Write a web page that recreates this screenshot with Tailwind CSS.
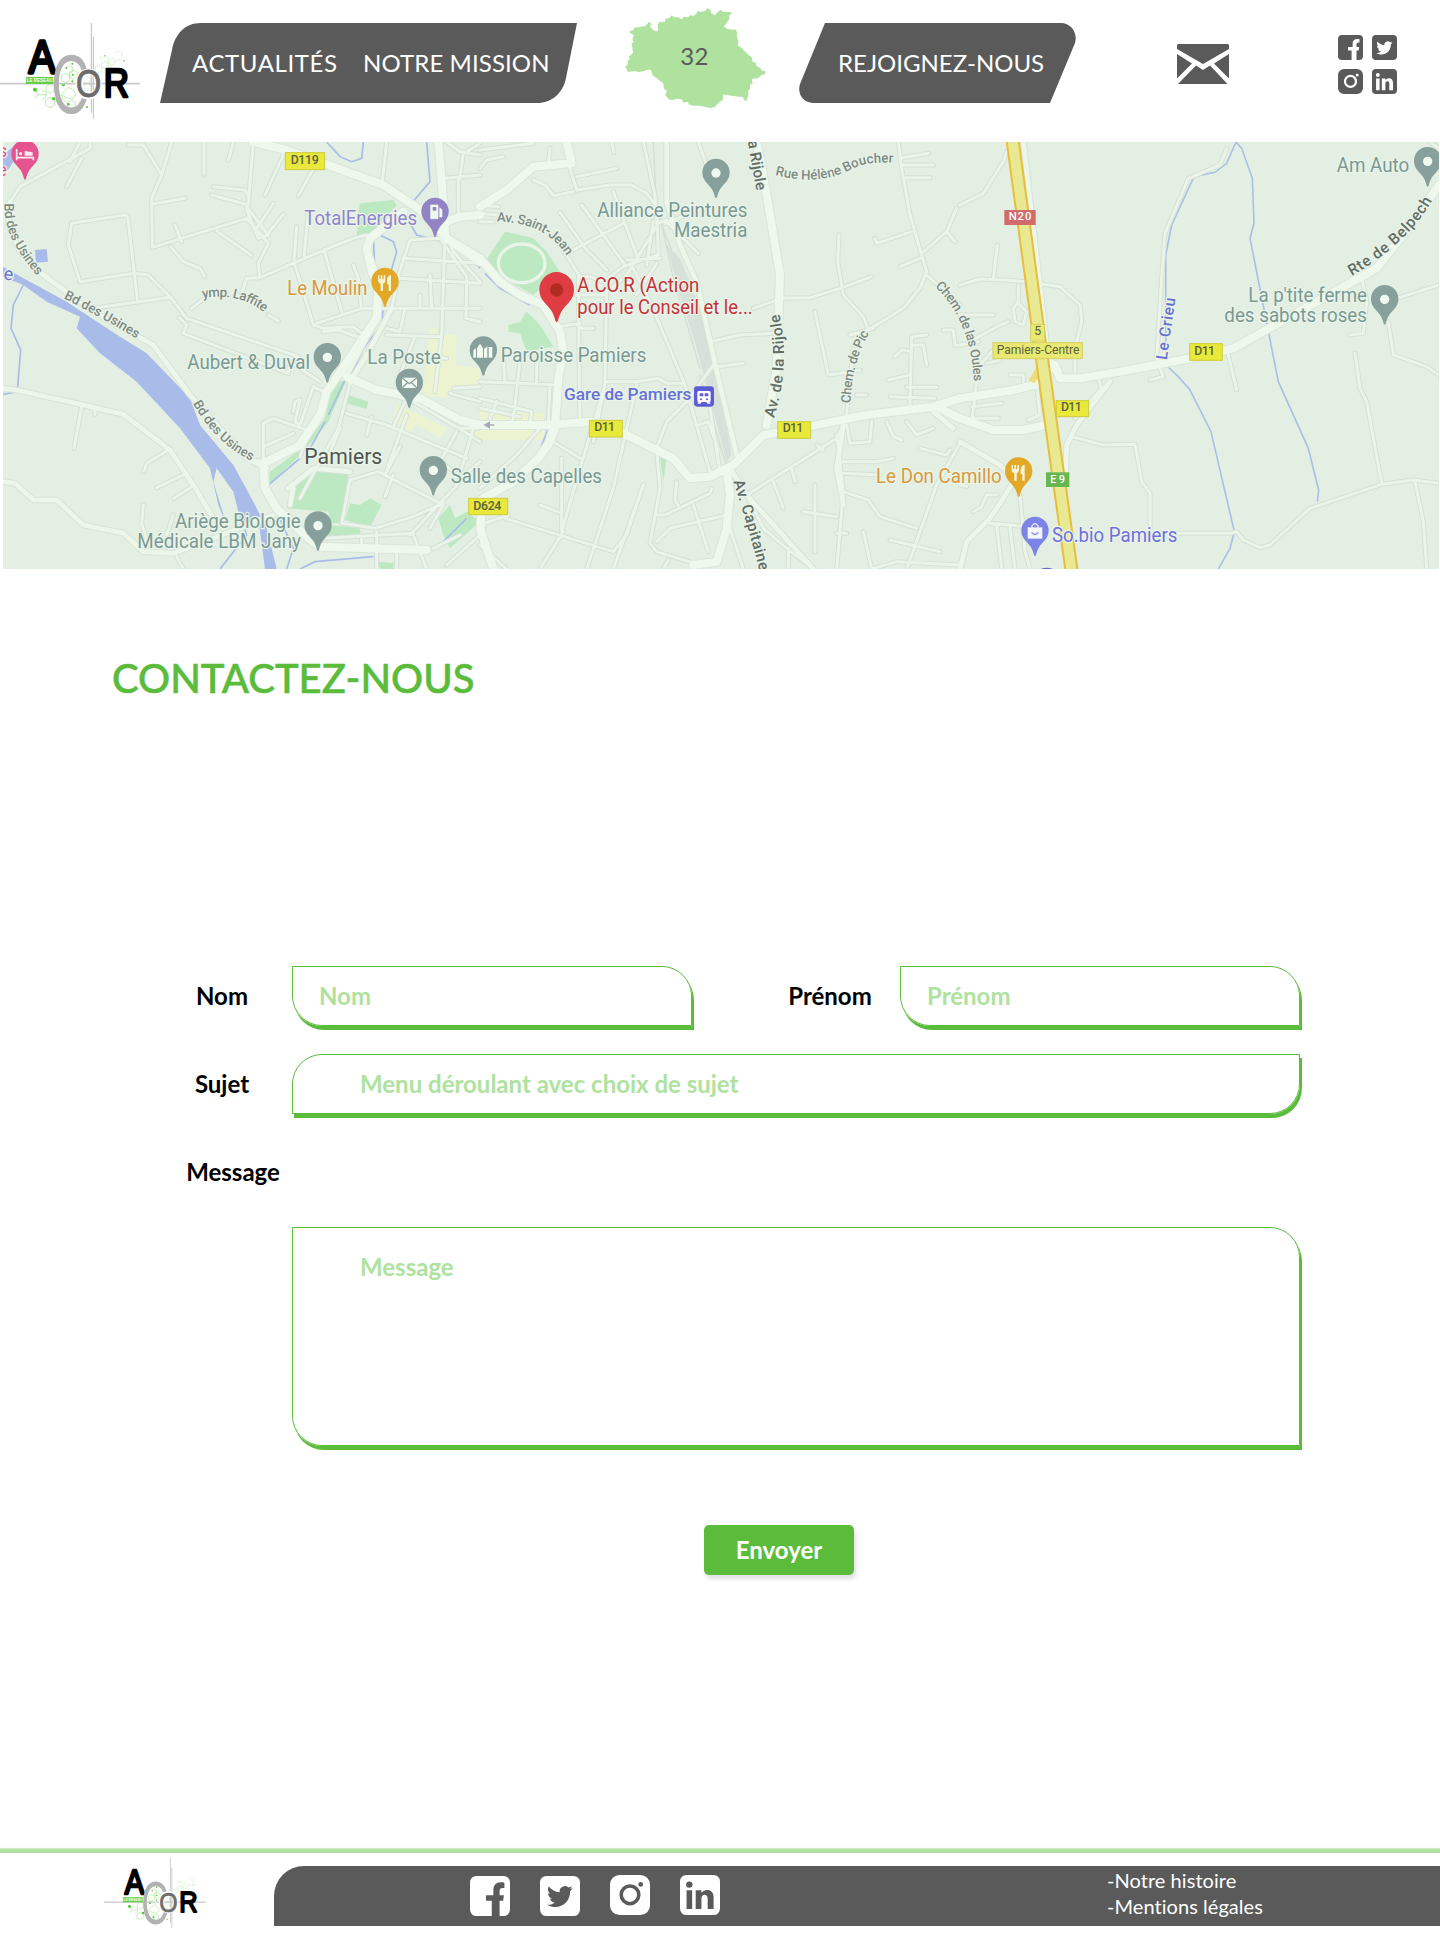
<!DOCTYPE html>
<html lang="fr">
<head>
<meta charset="utf-8">
<title>ACOR - Contactez-nous</title>
<script src="https://cdn.jsdelivr.net/npm/@tailwindcss/browser@4"></script>
</head>
<body class="bg-white font-['Lato',sans-serif]">
<!-- Shared symbols -->
<svg class="hidden">
  <defs>
    <symbol id="logo" viewBox="0 0 450 360">
      <g fill="none" stroke="#7ddc62" stroke-width="2" opacity=".75">
        <path d="M150 222l12 7v14l-12 7-12-7v-14zM126 240l12 7v14l-12 7M150 262l14 8v15l-14 8-14-8v-15zM105 238l10 16 23 0M115 254l-9 12M174 250l12 7v14l-12 7-12-7M205 232l14 8 8 12-8 13-14 0-12-5-6-10zM197 190l12 7v14l-12 7-12-7v-14zM220 180l12 7v14l-12 7-12-7v-14zM205 165l12 7v14l-12 7M190 270l12 7v14l12 7 12-7v-14l-12-7-12 7M235 275l12 7v10l-12 7"/>
        <path d="M285 172l10-6 10 6v10l-10 6-10-6zM305 160l10-6 10 6v10l-10 6-10-6zM325 150l10-6 10 6v10l-10 6-10-6zM300 145l12-6 10 5M345 130l10-7 10 6v10M350 152l12-4 12 4M250 205l10-6 10 6v10l-10 6-10-6zM252 225l10-6 12 6v12l-12 6-10-6z" stroke-dasharray="4 3"/>
      </g>
      <g fill="#53c736"><circle cx="105" cy="239" r="6"/><circle cx="161" cy="266" r="5"/><circle cx="190" cy="224" r="5"/><circle cx="217" cy="161" r="3"/><circle cx="199" cy="174" r="3"/><circle cx="218" cy="194" r="3"/><circle cx="217" cy="214" r="3"/><circle cx="205" cy="283" r="4"/><circle cx="240" cy="286" r="3"/><circle cx="261" cy="291" r="3"/><circle cx="315" cy="137" r="2"/><circle cx="372" cy="153" r="2"/></g>
      <path d="M0 221h420" stroke="#c9c9c9" stroke-width="5"/>
      <path d="M274 39v269M280 80v246" stroke="#bdbdbd" stroke-width="3"/>
      <text transform="translate(86 190) scale(.86 1)" font-family="Liberation Sans" font-size="140" stroke="#000" stroke-width="10" stroke-linejoin="round">A</text>
      <rect x="78" y="201" width="82" height="21" fill="#65cf47"/>
      <text x="80" y="217" font-family="Liberation Sans" font-weight="bold" font-size="16" fill="#fff" textLength="78" lengthAdjust="spacingAndGlyphs">LE RESEAU</text>
      <text transform="translate(154 310) scale(.62 1)" font-family="Liberation Sans" font-size="252" fill="#b2b2b2">C</text>
      <text transform="translate(226 263) scale(.86 1)" font-family="Liberation Sans" font-weight="bold" font-size="120" fill="#fff" stroke="#fff" stroke-width="8">O</text>
      <path d="M250 221h36M274 190v60M280 190v60" stroke="#c9c9c9" stroke-width="3"/>
      <text transform="translate(228 260) scale(.84 1)" font-family="Liberation Sans" font-size="116" fill="#6c6c6c" stroke="#6c6c6c" stroke-width="3">O</text>
      <text transform="translate(311 260) scale(.86 1)" font-family="Liberation Sans" font-size="122" stroke="#000" stroke-width="8" stroke-linejoin="round">R</text>
    </symbol>
    <symbol id="facebook" viewBox="0 0 25 25">
      <path fill-rule="evenodd" d="M4 0h17a4 4 0 0 1 4 4v17a4 4 0 0 1-4 4h-2.500v-9.500h2.200l.5-3.500h-2.700V9.500c0-1.300.5-2 2-2h1V4.200c-.5-.2-1.300-.3-2.200-.3-3 0-4.700 1.800-4.700 5V12H10v3.500h3.600V25H4a4 4 0 0 1-4-4V4a4 4 0 0 1 4-4z"/>
    </symbol>
    <symbol id="twitter" viewBox="0 0 25 25">
      <path fill-rule="evenodd" d="M4 0h17a4 4 0 0 1 4 4v17a4 4 0 0 1-4 4H4a4 4 0 0 1-4-4V4a4 4 0 0 1 4-4zM20.500 7.600l-1.700.5 1.300-1.700-2.100.8a3.400 3.400 0 0 0-5.700 3C9.500 10 7.300 8.800 5.500 6.600c-1 1.700-.4 3.600 1 4.600l-1.500-.4c0 1.600 1.200 3 2.700 3.400h-1.500c.4 1.300 1.600 2.300 3.100 2.300-1.400 1.100-3.100 1.600-4.900 1.400 6.600 4 14.500-.2 14.400-8.300z"/>
    </symbol>
    <symbol id="instagram" viewBox="0 0 25 25">
      <path fill-rule="evenodd" d="M6 0h13a6 6 0 0 1 6 6v13a6 6 0 0 1-6 6H6a6 6 0 0 1-6-6V6a6 6 0 0 1 6-6zM12.500 5.800a6.600 6.600 0 1 0 0 13.200 6.600 6.600 0 0 0 0-13.200zm0 2.200a4.400 4.400 0 1 1 0 8.800 4.400 4.400 0 0 1 0-8.800zM19.200 4.400a1.500 1.500 0 1 0 0 3 1.500 1.500 0 0 0 0-3z"/>
    </symbol>
    <symbol id="linkedin" viewBox="0 0 25 25">
      <path fill-rule="evenodd" d="M4 0h17a4 4 0 0 1 4 4v17a4 4 0 0 1-4 4H4a4 4 0 0 1-4-4V4a4 4 0 0 1 4-4zM4.100 9.500h3.500v11.700H4.100zM5.850 4a2 2 0 1 0 0 4 2 2 0 0 0 0-4zM9.800 9.500v11.700h3.600v-6.500c0-3.200 3.900-3 3.900 0v6.500h3.700v-7.300c0-5.500-5.800-5.500-7.600-2.600V9.500z"/>
    </symbol>
    <symbol id="pin" viewBox="0 0 82 118" overflow="visible">
      <path d="M41 0a41 41 0 0 1 41 41c0 24-16 33-27 48-6 9-9 18-11 27q-3 5-6 0c-2-9-5-18-11-27C16 74 0 65 0 41A41 41 0 0 1 41 0z"/>
    </symbol>
  </defs>
</svg>

<header class="flex h-[142px] items-start">
  <svg class="mt-2.5 h-[120px] w-[150px] shrink-0"><use href="#logo"/></svg>
  <nav class="relative mt-[23px] ml-2.5 flex h-20 w-[417px] shrink-0 items-center pl-8 text-2xl text-white">
    <svg class="absolute inset-0 h-20 w-[417px]" viewBox="0 0 417 80"><path d="M41 0H417L406 55C403 70 392 80 377 80H0L12 27C15 11 25 0 41 0Z" fill="#5a5a5a"/></svg>
    <a class="relative w-[171px] whitespace-nowrap tracking-[0.6px]">ACTUALITÉS</a>
    <a class="relative whitespace-nowrap tracking-[0.1px]">NOTRE MISSION</a>
  </nav>
  <div class="relative mt-2 ml-12 flex h-[100px] w-[141px] shrink-0 items-center justify-center text-2xl text-[#5a5a5a]">
    <svg class="absolute inset-0 h-[100px] w-[141px]" viewBox="76 24 421 299"><polygon fill="#aee29e" points="323,24 333,32 333,40 345,46 352,36 362,30 370,36 386,35 397,39 386,47 388,57 380,68 371,79 382,87 398,89 408,88 411,98 410,110 415,124 413,136 424,143 432,152 444,163 455,172 457,184 467,189 468,196 481,204 484,210 496,214 494,222 484,224 472,235 458,235 455,240 458,250 449,254 450,264 444,272 445,285 438,302 432,299 428,290 415,289 400,287 385,285 370,283 368,298 355,308 343,321 330,323 315,319 296,316 278,316 266,312 264,304 250,307 246,297 230,296 213,300 202,292 196,283 201,272 192,265 190,250 180,242 168,232 158,225 154,210 146,208 130,213 118,215 104,212 84,215 80,206 76,200 84,194 83,182 90,178 87,170 95,163 100,157 98,145 95,130 101,126 98,118 102,105 90,98 90,93 102,90 103,82 113,82 122,80 137,78 148,65 155,72 150,80 160,90 170,94 175,88 173,78 176,68 181,64 186,68 190,63 194,67 197,56 208,54 216,46 222,52 235,52 245,58 253,50 264,52 272,45 280,48 288,42 293,34 305,35 315,33"/></svg>
    <span class="relative -mt-[5px] mr-0.5 tracking-[0.3px]">32</span>
  </div>
  <nav class="relative mt-[23px] ml-[33px] flex h-20 w-[277px] shrink-0 items-center pl-[39px] text-2xl text-white">
    <svg class="absolute inset-0 h-20 w-[277px]" viewBox="0 0 277 80"><path d="M26 0H262C272 0 279 10 276 20L251 80H14C4 80-2 71 1 61Z" fill="#5a5a5a"/></svg>
    <a class="relative whitespace-nowrap">REJOIGNEZ-NOUS</a>
  </nav>
  <svg class="mt-11 ml-[101px] h-10 w-[52px] shrink-0" viewBox="0 0 52 40" fill="#5a5a5a"><path d="M1 0h50l1 1v4L26 20 0 5V1zM0 10l15 9.500L0 34.500zM52 10L37 19.500l15 15zM1 40l18-18.500 7 4.500 7-4.500L50.500 40z"/></svg>
  <div class="mt-[35px] ml-[109px] grid shrink-0 grid-cols-2 gap-[9px] fill-[#5a5a5a]">
    <svg class="size-[25px]"><use href="#facebook"/></svg>
    <svg class="size-[25px]"><use href="#twitter"/></svg>
    <svg class="size-[25px]"><use href="#instagram"/></svg>
    <svg class="size-[25px]"><use href="#linkedin"/></svg>
  </div>
</header>

<main>
  <svg class="ml-[3px] block h-[427px] w-[1436px]" viewBox="9 21 4308 1281" font-family="Roboto, sans-serif">
    <defs>
      <g id="minor">
        <path d="M270 21V40L60 155 30 200M385 30H430L485 120 455 190 457 337 740 250M515 21L485 120M457 207L555 190M210 80L240 21M245 70L200 155M612 21V118M700 21L685 75M760 21L745 205 740 215 805 300 775 310 740 225M635 180L745 210M640 155L735 165 745 185M850 60L795 180M938 105L895 182M1160 21L1145 155M925 230L912 365M890 275L882 380 940 570 970 580 1060 575 1100 608M972 345L1025 530M1060 390L1075 430 1083 515M215 265L375 240 383 245 403 415 240 440 205 330ZM403 415L445 420 512 487 290 518M403 415L412 495M512 335L550 380 600 400 615 425M525 270L545 320M650 288L755 362M740 250L805 325 775 385 780 428 740 430 725 475M780 428L972 345 1060 310 1100 300M820 205L770 280M850 238L800 300M575 520L620 485M805 540L835 558M512 487L560 550 895 665M538 548L560 570 550 595 865 715 870 680 960 740M970 590L1015 585 1100 615"/>
        <path d="M950 565L1085 520H1440M1175 520L1200 405 1230 315 1320 310 1400 425M1210 370L1440 385M1195 430L1440 445M1335 300L1325 600 1305 770M1345 310L1360 350 1440 440M1400 430L1398 550 1440 560M1215 520L1200 590 1160 580M1160 600L1325 605M1290 420L1295 520M1260 480V520M1200 660L1340 670M1245 605L1200 720M1050 745L1015 880 900 1090M1130 765L1240 800 1385 885 1440 920M1220 840L1155 1020M1040 835L1160 870 1400 970M1115 845L1100 900M1180 875L1215 800M1370 890L1320 980 1390 1030 1230 1200M1020 880L975 990M1385 1000L1420 880M1200 935L1160 1010M900 965L920 910M1050 1035L1135 1010 1330 1110 1290 1180M1155 1085L1180 1020M1050 1035L1025 1165 1125 1180 1240 1145 1330 1105M970 1210L1240 1195M1130 1190V1300M1085 1210V1245M940 755L900 870 885 860 900 795 885 800 880 830M940 755L970 770M790 980V865L820 850 920 885M790 935L880 895"/>
        <path d="M1240 1200L1280 1302M1340 1290L1440 1200M1190 1240V1302M1300 1240L1380 1200M1440 60L1380 50 1340 21M1380 130L1390 50M1335 130L1440 120M1375 130V240M1440 25L1400 50M245 815L222 940M285 820V838M505 945L440 985 432 1010M550 1020L470 1058M580 1052L522 1090M430 1110L425 1165 445 1230M520 1140L500 1200M530 1265L550 1302M800 980L760 975M1380 1030L1440 980M1430 880L1385 880M1360 760L1440 755M1350 775L1440 800"/>
        <g transform="translate(1440)">
          <path d="M0 45L160 25M0 100L20 75 70 65M0 210L55 215M0 235L50 240M0 260L40 260M210 40L205 85M395 21L402 52M270 100L290 165 390 150 455 150 500 175 530 215 535 360 500 370 430 395 370 440 330 425 300 425 240 330M290 125L410 100M160 135L195 150 220 182 280 170M240 232L320 345 380 405M305 210L435 390M400 170L470 360M535 265L440 420 370 480M430 265L270 350M440 375L540 370M380 440L375 750 300 1000 245 1190M295 425L298 745 300 850M375 480H290M460 400L510 500 615 750 690 1010M470 480L530 385M490 21L525 180 530 265 560 255M560 260L655 355M655 21L690 120M555 265L620 240M520 260L500 390M375 740H470L535 730 560 745H610M300 580H340M300 565L235 575M375 750L340 920M0 740L240 750M120 680L100 850 90 870M170 670V740M70 680L75 740M0 790L155 830 150 870M0 820L120 845M50 800L30 850M210 750L205 870M470 750L440 880 400 1060 320 1302M530 940L560 860 620 800 700 690M220 920L300 970M0 1060L110 960 180 880M0 1170L85 1140M75 1150L400 1250 440 1200 490 1050M180 1110L245 1135M0 1230L80 1302M245 970V1190M250 1190L180 1302"/>
          <path d="M530 950L540 1060 510 1225 530 1250 660 1290M530 1140L555 1140 690 1075 695 1060M530 1220L570 1180 740 1140M590 1040L585 1095 600 1120M640 1110L685 1250M740 1150L790 1302M655 870L685 860 715 945M400 1302L490 1050M565 1275L550 1302M690 620L780 600 880 595M710 695L790 685M820 520L905 490 990 488 1080 460 1175 425M1077 300L1073 380 1090 480 1150 545 1165 585M1165 585L1270 520 1320 460 1340 410 1325 360 1290 240 1265 100 1255 21M1260 70L1345 55M1265 90H1360M1270 128H1350M1325 355L1400 290 1430 220M1400 290L1425 320M1185 310L1190 325 1295 290M1260 395L1320 370M1340 420L1440 510M1110 600L1180 580M1005 530L1045 720 1140 705M1100 840L1120 640M1290 810L1295 605 1340 600M1245 665L1265 645 1295 650M1300 630L1330 630 1340 690M1225 735L1290 720M1230 785L1365 790M1280 757H1370M1390 585H1420L1425 630H1440M720 1010L690 820M800 1080L1070 910 1090 870M1100 870L1110 925 1170 920 1175 860M1070 900L1090 1070 1070 1302M1085 980H1190L1240 970M1090 1015L1200 1020M1090 1070L1165 1095 1200 1145 1310 1180M1005 1050V1250M970 1130L1070 1145M1070 1195H1100M880 1040L910 1120M935 1000L945 1040M1010 930L1030 945M800 1080L850 1180 920 1240 1000 1300M925 1240V1302M1150 1190L1175 1302M1230 1215L1380 1250M1440 925L1370 1050 1280 1302M1320 940L1400 960 1410 945M1220 860L1240 905 1265 915M1280 860L1310 900 1360 880M1130 780H1160M1180 1300L1250 1280 1440 1290"/>
        </g>
        <g transform="translate(2880)">
          <path d="M0 210L70 175 130 80 140 50M0 450L60 432 130 435 200 440 300 455 360 510 365 560 345 640 345 710M100 430L112 330M175 450V500L160 520 165 560 190 570 200 530 175 505M0 540H100M30 620L120 570 145 560M60 690L95 650M150 720L190 720 190 740M0 630L55 620M50 740L35 860M35 815L125 805M40 850L115 850M230 750L240 840 205 855M80 685L120 675M570 735L610 725 600 700 590 670 605 430 615 295 685 130 780 90 800 40M800 640L830 765M1205 430L1220 500 1210 595 1170 600M1310 490L1437 450M1285 560L1300 660 1400 695 1437 720M1185 655L1200 760 1220 800 1265 1045M1365 1040L1390 1160 1400 1300M335 905L430 930 525 928 545 1040 570 1075 570 1195M650 1195H810L830 1190 850 1215 900 1238 930 1230 1050 1120 1265 1048 1360 1035 1437 1045M180 1080L195 1250 210 1302M150 1180L165 1302M95 1165L110 1170 125 1302M90 1165L200 1175M40 1130L65 1115 80 1080 110 1080M415 730L425 760 345 850M0 1050L20 1055M1410 21L1437 40"/>
        </g>
      </g>
      <g id="medium">
        <path d="M30 200L25 270 60 350 130 420 280 530 460 630 570 780 740 970 800 1000M9 760L50 765 250 810 370 838 510 945 580 1050 640 1150M9 1040L45 1045 100 1095H170L250 1170 370 1195 430 1250 520 1255 640 1210 820 1140M1175 520L1100 660 1050 740M1105 310L1105 350 1135 430 1130 550 1040 720M865 1060L940 1000 1050 1010M870 1110L880 1060"/>
        <path d="M2000 21L2000 200 2040 330 2090 440 2160 750 2210 960M2190 1000L2240 1080 2330 1180 2440 1302M2530 870L2510 1000 2530 1110M1440 1090L1450 1210 1485 1302"/>
        <path d="M2880 920L3000 990 3040 1030 3035 1050 2970 1150 2900 1220 2880 1302M3330 740L3230 870 3200 930 3195 1060M3070 21L3140 630 3165 710M2800 830L2860 880"/>
      </g>
      <g id="major">
        <path d="M760 21L860 45 1150 150 1260 225 1340 310 1440 380M1315 21L1330 200 1335 300M1340 260L1380 245 1440 240M1210 230L1110 310 1100 340 1115 410 1135 450 1130 550 980 770 960 840 900 930 790 985 795 1060 830 1120 925 1210 960 1235 1280 1245M1040 725L1130 765 1260 790 1380 855 1440 870"/>
        <path d="M1440 215L1520 165 1600 95 1710 85M1700 21L1715 85M1340 310L1440 370 1500 440 1560 480 1630 510 1680 590 1690 650 1675 730 1665 880 1650 920 1615 970 1540 1040 1450 1090 1440 1180 1480 1302M1440 870H1640L1770 860 1860 890 1960 940 2020 970 2070 1030 2130 1025 2200 990 2290 900 2350 890 2600 840 2800 815 2880 790M2180 1010L2190 1080 2180 1180 2150 1280 2080 1290M2270 21L2300 180 2340 420 2330 700 2300 870M1660 880L1645 930"/>
        <path d="M2820 820L2880 850 2980 885H3070L3160 865M2880 790L3040 765 3120 745 3150 700M3165 690L3180 730H3240L3360 710 3570 670 3700 640 4130 400 4240 260 4317 150"/>
      </g>
      <path id="t-usines1" d="M14 205Q5 300 110 420"/><path id="t-usines2" d="M190 490Q330 560 410 612"/><path id="t-usines3" d="M578 805Q650 930 760 980"/>
      <path id="t-laff" d="M608 490Q720 470 795 535"/><path id="t-jean" d="M1490 260Q1640 260 1705 370"/>
      <path id="t-helene" d="M2325 120Q2460 155 2560 100 2600 78 2690 84"/><path id="t-rijole" d="M2322 850Q2372 690 2338 535"/>
      <path id="t-pic" d="M2552 805Q2555 680 2610 590"/><path id="t-oules" d="M2805 455Q2915 560 2922 745"/>
      <path id="t-belp" d="M4055 423Q4225 325 4300 190"/><path id="t-cap" d="M2200 1040Q2240 1160 2285 1330"/>
    </defs>
    <rect x="9" y="21" width="4308" height="1281" fill="#e4efe3"/>
    <!-- Parks and squares -->
    <path fill="#bce9c2" d="M1080 205L1180 195 1190 210 1110 300 1070 305 1075 230zM1000 745L1040 735 985 860 910 950 870 990 805 1050 810 1010 905 940 975 850zM1045 780L1105 800 1100 822 1040 805zM950 995L1040 1000 1045 1020 1025 1165 990 1165 985 1130 860 1120 880 1045zM1050 1105L1080 1110 1110 1090 1145 1110 1110 1175 1035 1155zM985 1170L1080 1180 1082 1205 980 1210zM1315 1150L1350 1110 1365 1150 1400 1130 1440 1160 1350 1240 1330 1200zM1135 1280L1180 1285V1302H1140zM1455 380L1515 290 1600 310 1640 350 1680 410 1600 480 1530 440 1480 420zM1525 570L1560 560 1580 530 1620 570 1660 635 1580 650 1560 595 1525 590zM1980 960L2000 970 1990 1040z"/>
    <path fill="#ecf3d0" d="M1290 580H1310V600H1370L1365 690 1440 700V760L1370 750 1340 790 1270 780 1285 640zM1190 810L1240 830 1340 880 1320 910 1250 870 1230 895 1180 860zM1260 810L1440 890V910L1390 900zM1440 815L1500 830 1630 835V915H1440z"/>
    <!-- Water -->
    <path fill="#a9bce9" d="M9 395L80 435 200 500 360 605 440 655 570 790 600 870 700 990 760 1100 800 1180 830 1302H795L775 1150 740 1180 715 1130 700 1070 650 1000 640 1040 680 1170 655 1110 630 1000 540 880 410 740 300 655 230 580 240 545 140 500 70 450 9 425zM105 345L140 342 144 380 108 383zM9 60L45 30 60 50 20 110H9z"/>
    <path fill="none" stroke="#a9bce9" stroke-width="5" d="M70 450L40 510 33 580 62 645 52 770 9 778M980 21L1020 65 1055 80 1085 70 1090 21M1280 21L1290 140 1230 210M1140 300L1180 320 1190 350 1170 420M1120 310L1125 410M1210 230L1250 300 1330 320M1390 330L1440 400M1150 520L1145 570 1090 640 1050 730M1035 735L985 840M975 860L930 940M900 970L805 1050M715 1130L740 1200 660 1302M830 1130L880 1240 860 1302M900 1302L945 1280 1120 1265M1260 1250L1310 1240 1400 1150M1455 415L1500 460 1590 510M1645 880L1610 970 1470 1090"/>
    <path fill="none" stroke="#abc0e8" stroke-width="5" d="M3708 21L3680 85 3645 112 3582 125 3515 270 3497 360 3498 690 3535 725 3570 765 3633 890 3703 1190 3690 1240 3655 1302M3708 21L3725 40 3757 130 3762 265 3750 310 3835 740 3925 940 3956 1065 3952 1100"/>
    <!-- Railway -->
    <path fill="#d6e2d9" d="M2000 330L2040 370 2100 520 2150 700 2195 960 2180 980 2130 790 2090 640 2040 480z"/>
    <path fill="none" stroke="#d3dfd6" stroke-width="4" d="M1925 21L1955 140 1990 290 2020 430 2100 700M1960 21L1970 230 2020 360M2100 720L2190 1030"/>
    <!-- Roads, casing then surface -->
    <g fill="none" stroke-linejoin="round" stroke-linecap="round">
      <use href="#minor" stroke="#d5e0d6" stroke-width="15"/>
      <use href="#medium" stroke="#d8e3d9" stroke-width="20"/>
      <use href="#major" stroke="#dae5db" stroke-width="30"/>
      <use href="#minor" stroke="#eaf4e9" stroke-width="9"/>
      <use href="#medium" stroke="#ecf7ea" stroke-width="14"/>
      <use href="#major" stroke="#eef8ec" stroke-width="24"/>
      <ellipse cx="1565" cy="385" rx="70" ry="58" fill="#bce9c2" stroke="#eaf4e9" stroke-width="10"/>
      <path d="M3095 740L3125 690" stroke="#ebdc7c" stroke-width="20" stroke-linecap="butt"/>
      <path d="M3037 10L3130 700 3215 1310" stroke="#e6be3c" stroke-width="42"/>
      <path d="M3037 10L3130 700 3215 1310" stroke="#eae993" stroke-width="30"/>
    </g>
    <!-- Street names -->
    <g font-size="40" font-weight="500" fill="#7d8a82" stroke="#e9f3e9" stroke-width="7" paint-order="stroke">
      <text><textPath href="#t-usines1" textLength="245">Bd des Usines</textPath></text>
      <text><textPath href="#t-usines2" textLength="250">Bd des Usines</textPath></text>
      <text><textPath href="#t-usines3" textLength="250">Bd des Usines</textPath></text>
      <text><textPath href="#t-laff" textLength="195">ymp. Laffite</textPath></text>
      <text><textPath href="#t-jean" textLength="245">Av. Saint-Jean</textPath></text>
      <text><textPath href="#t-helene" textLength="364">Rue Hélène Boucher</textPath></text>
      <text><textPath href="#t-pic" textLength="220">Chem. de Pic</textPath></text>
      <text><textPath href="#t-oules" textLength="315">Chem. de las Oules</textPath></text>
      <g font-size="46" fill="#616d65">
        <text><textPath href="#t-rijole" textLength="317">Av. de la Rijole</textPath></text>
        <text><textPath href="#t-belp" textLength="335">Rte de Belpech</textPath></text>
        <text><textPath href="#t-cap" textLength="280">Av. Capitaine</textPath></text>
        <text transform="translate(2241 7) rotate(80)" textLength="163">la Rijole</text>
      </g>
      <text transform="translate(3500 676) rotate(-82)" font-size="47" fill="#6672cf" textLength="188">Le Crieu</text>
    </g>
    <!-- Place names -->
    <g font-size="58" fill="#7a9994" stroke="#eaf5ea" stroke-width="7" paint-order="stroke">
      <text x="562" y="702" textLength="368" lengthAdjust="spacingAndGlyphs">Aubert &amp; Duval</text>
      <text x="1102" y="686" textLength="220" lengthAdjust="spacingAndGlyphs">La Poste</text>
      <text x="525" y="1178" textLength="377" lengthAdjust="spacingAndGlyphs">Ariège Biologie</text>
      <text x="412" y="1239" textLength="491" lengthAdjust="spacingAndGlyphs">Médicale LBM Jany</text>
      <text x="1352" y="1045" textLength="454" lengthAdjust="spacingAndGlyphs">Salle des Capelles</text>
      <text x="1502" y="682" textLength="437" lengthAdjust="spacingAndGlyphs">Paroisse Pamiers</text>
      <text x="1792" y="246" textLength="450" lengthAdjust="spacingAndGlyphs">Alliance Peintures</text>
      <text x="2022" y="306" textLength="220" lengthAdjust="spacingAndGlyphs">Maestria</text>
      <text x="4010" y="112" textLength="218" lengthAdjust="spacingAndGlyphs">Am Auto</text>
      <text x="3745" y="500" textLength="356" lengthAdjust="spacingAndGlyphs">La p'tite ferme</text>
      <text x="3673" y="561" textLength="428" lengthAdjust="spacingAndGlyphs">des sabots roses</text>
      <text x="913" y="270" fill="#9184cb" textLength="338" lengthAdjust="spacingAndGlyphs">TotalEnergies</text>
      <text x="862" y="480" fill="#d9983c" textLength="240" lengthAdjust="spacingAndGlyphs">Le Moulin</text>
      <text x="2628" y="1045" fill="#d9983c" textLength="377" lengthAdjust="spacingAndGlyphs">Le Don Camillo</text>
      <text x="3156" y="1222" fill="#6f6fdc" textLength="376" lengthAdjust="spacingAndGlyphs">So.bio Pamiers</text>
      <text x="1692" y="795" font-size="47" font-weight="500" fill="#6771d6" textLength="382" lengthAdjust="spacingAndGlyphs">Gare de Pamiers</text>
      <text x="913" y="988" font-size="65" fill="#50564f" textLength="234" lengthAdjust="spacingAndGlyphs">Pamiers</text>
      <text x="1732" y="472" fill="#c53237" textLength="366" lengthAdjust="spacingAndGlyphs">A.CO.R (Action</text>
      <text x="1732" y="537" fill="#c53237" textLength="526" lengthAdjust="spacingAndGlyphs">pour le Conseil et le...</text>
      <text x="-6" y="65" font-size="54" fill="#e8508e">s</text>
      <text x="-8" y="124" font-size="54" fill="#e8508e">e</text>
      <text x="9" y="433" font-size="54" fill="#6672cf" textLength="28" transform="rotate(8 9 435)">e</text>
    </g>
    <!-- Road numbers -->
    <g font-size="37" font-weight="500" fill="#5c6140" text-anchor="middle" stroke-width="3">
      <g fill="#e8e93a" stroke="#cfcb3c"><rect x="856" y="53" width="118" height="51"/><rect x="1768" y="856" width="99" height="50"/><rect x="2333" y="860" width="99" height="50"/><rect x="1406" y="1090" width="117" height="49"/><rect x="3569" y="626" width="98" height="50"/><rect x="3169" y="797" width="97" height="48"/></g>
      <g fill="#e9e971" stroke="#d8d060"><rect x="3092" y="568" width="42" height="50"/><rect x="2979" y="623" width="268" height="48"/></g>
      <text x="914" y="87" textLength="84">D119</text><text x="1814" y="889" textLength="62">D11</text><text x="2379" y="892" textLength="62">D11</text><text x="1462" y="1124" textLength="84">D624</text><text x="3614" y="660" textLength="62">D11</text><text x="3214" y="829" textLength="62">D11</text>
      <text x="3113" y="600" font-weight="400">5</text><text x="3114" y="656" font-size="36" textLength="248" font-weight="400">Pamiers-Centre</text>
      <rect x="3013" y="225" width="94" height="45" fill="#d16b6b"/><text x="3060" y="254" fill="#fff" font-size="34" textLength="68">N20</text>
      <rect x="3138" y="1012" width="70" height="44" fill="#67b652"/><text x="3173" y="1043" fill="#fff" font-size="33" textLength="44">E9</text>
    </g>
    <!-- Map pins -->
    <g fill="#87a09c">
      <use href="#pin" x="941" y="624" width="82" height="118"/><use href="#pin" x="1187" y="701" width="82" height="118"/><use href="#pin" x="1259" y="963" width="82" height="118"/><use href="#pin" x="913" y="1129" width="82" height="118"/><use href="#pin" x="1409" y="604" width="82" height="118"/><use href="#pin" x="2107" y="71" width="82" height="118"/><use href="#pin" x="4242" y="36" width="82" height="118"/><use href="#pin" x="4113" y="450" width="82" height="118"/>
    </g>
    <g fill="#f1faf1"><circle cx="982" cy="667" r="14"/><circle cx="1300" cy="1006" r="14"/><circle cx="954" cy="1172" r="14"/><circle cx="2148" cy="114" r="14"/><circle cx="4283" cy="79" r="14"/><circle cx="4154" cy="493" r="14"/>
      <rect x="1206" y="728" width="45" height="31"/><path d="M1431 668V640l9-14 9 14v28zM1452 668v-26l10-8v34zM1420 668v-22l8-6v28zM1466 668v-32h11v32z"/></g>
    <path d="M1206 728l22 18 23-18M1206 759l16-16M1251 759l-16-16" fill="none" stroke="#87a09c" stroke-width="4"/>
    <use href="#pin" x="1264" y="188" width="82" height="118" fill="#9183c4"/>
    <path d="M1292 210h22v41h-22zM1318 218l8 6v22h-8" fill="#f1faf1" stroke="#f1faf1" stroke-width="2"/><path d="M1298 216h11v11h-11z" fill="#9183c4"/>
    <g fill="#e3a926"><use href="#pin" x="1114" y="398" width="82" height="118"/><use href="#pin" x="3015" y="967" width="82" height="118"/></g>
    <g id="fork" fill="#f6f6dc"><path d="M1134 421h4v12h4v-12h5v12h4v-12h5v16q-1 7-7 9v22h-7v-22q-7-2-8-9zM1173 420v48h-7v-20h-5v-14q2-12 12-14z"/></g>
    <use href="#fork" x="1901" y="569"/>
    <use href="#pin" x="3064" y="1145" width="82" height="118" fill="#7d84e8"/>
    <path d="M3083 1177h44v34h-44z" fill="#f3f6fd"/><path d="M3096 1178v-5q9-14 18 0v5" fill="none" stroke="#f3f6fd" stroke-width="4"/><path d="M3095 1192q10 13 20 0" fill="none" stroke="#7d84e8" stroke-width="4"/>
    <path d="M3122 1302q18-7 36 0z" fill="#6d67cf"/>
    <use href="#pin" x="34" y="15" width="82" height="118" fill="#e6548f"/>
    <path d="M50 42v34M50 68h50v8" fill="none" stroke="#fbeaf1" stroke-width="5"/><path d="M74 62V48l24 4v10z" fill="#fbeaf1"/><circle cx="62" cy="56" r="5" fill="#fbeaf1"/>
    <use href="#pin" x="1618" y="411" width="104" height="150" fill="#df3c43"/><circle cx="1670" cy="465" r="20" fill="#b12c23"/>
    <rect x="2082" y="754" width="60" height="61" rx="10" fill="#5e5bd6"/><path d="M2096 768h32q4 0 4 5v24q0 4-4 4l4 5h-9l-4-5h-14l-4 5h-9l4-5q-4 0-4-4v-24q0-5 4-5z" fill="#fff"/><path d="M2099 775h11v9h-11zM2114 775h11v9h-11z" fill="#5e5bd6"/><circle cx="2103" cy="793" r="3" fill="#5e5bd6"/><circle cx="2121" cy="793" r="3" fill="#5e5bd6"/>
    <path d="M1483 870h-22M1468 862l-14 8 14 8z" stroke="#aaa9b5" stroke-width="4" fill="#aaa9b5"/>
  </svg>

  <h1 class="mt-[85px] ml-28 text-[40px] leading-[48px] font-medium text-[#5bbc3b] [-webkit-text-stroke:0.6px_#5bbc3b]">CONTACTEZ-NOUS</h1>

  <form class="mt-[264px] ml-[162px] flex w-[1138px] flex-col text-2xl font-bold">
    <div class="flex h-[60px] items-center">
      <label class="w-[120px] text-center">Nom</label>
      <div class="ml-2.5 flex h-[60px] w-[400px] items-center rounded-tr-[30px] rounded-bl-[30px] border border-[#5bbc3b] pl-[26px] text-[#aee29e] shadow-[2px_4px_0_#5bbc3b]">Nom</div>
      <label class="ml-[78px] w-[120px] text-center">Prénom</label>
      <div class="ml-2.5 flex h-[60px] w-[400px] items-center rounded-tr-[30px] rounded-bl-[30px] border border-[#5bbc3b] pl-[26px] text-[#aee29e] shadow-[2px_4px_0_#5bbc3b]">Prénom</div>
    </div>
    <div class="mt-7 flex h-[60px] items-center">
      <label class="w-[120px] text-center">Sujet</label>
      <div class="ml-2.5 flex h-[60px] w-[1008px] items-center rounded-tl-[30px] rounded-br-[30px] border border-[#5bbc3b] pl-[67px] text-[#aee29e] shadow-[2px_4px_0_#5bbc3b]">Menu déroulant avec choix de sujet</div>
    </div>
    <label class="mt-7 flex h-[60px] w-[142px] items-center justify-center">Message</label>
    <div class="mt-[25px] ml-[130px] h-[219px] w-[1008px] rounded-tr-[30px] rounded-bl-[30px] border border-[#5bbc3b] pt-[23px] pl-[67px] text-[#aee29e] shadow-[2px_4px_0_#5bbc3b]">Message</div>
    <button type="button" class="mt-[79px] ml-[542px] h-[50px] w-[150px] rounded-[5px] bg-[#5bbc3b] text-white shadow-[2px_4px_4px_rgba(0,0,0,0.12)]">Envoyer</button>
  </form>
</main>

<footer class="mt-[274px]">
  <div class="h-1 bg-gradient-to-b from-[#b9e5ac] to-[#a9dc99] shadow-[0_-1px_1px_#c9ebbf]"></div>
  <div class="flex h-20 items-start">
    <svg class="-mt-[5px] ml-[104px] h-[88px] w-[109px] shrink-0" viewBox="0 0 450 360" preserveAspectRatio="none"><use href="#logo" width="450" height="360"/></svg>
    <div class="mt-[13px] ml-[61px] flex h-[60px] flex-1 items-start rounded-tl-[30px] bg-[#5a5a5a] pl-[196px] text-white">
      <div class="flex gap-[30px] fill-white">
        <svg class="mt-2.5 size-10"><use href="#facebook"/></svg>
        <svg class="mt-2.5 size-10"><use href="#twitter"/></svg>
        <svg class="mt-[9px] size-10"><use href="#instagram"/></svg>
        <svg class="mt-[9px] size-10"><use href="#linkedin"/></svg>
      </div>
      <div class="mt-px ml-[387px] text-xl leading-[26px] tracking-[0.05px] whitespace-nowrap [font-variant-ligatures:common-ligatures]">
        <p>-Notre histoire</p>
        <p>-Mentions légales</p>
      </div>
    </div>
  </div>
</footer>
</body>
</html>
